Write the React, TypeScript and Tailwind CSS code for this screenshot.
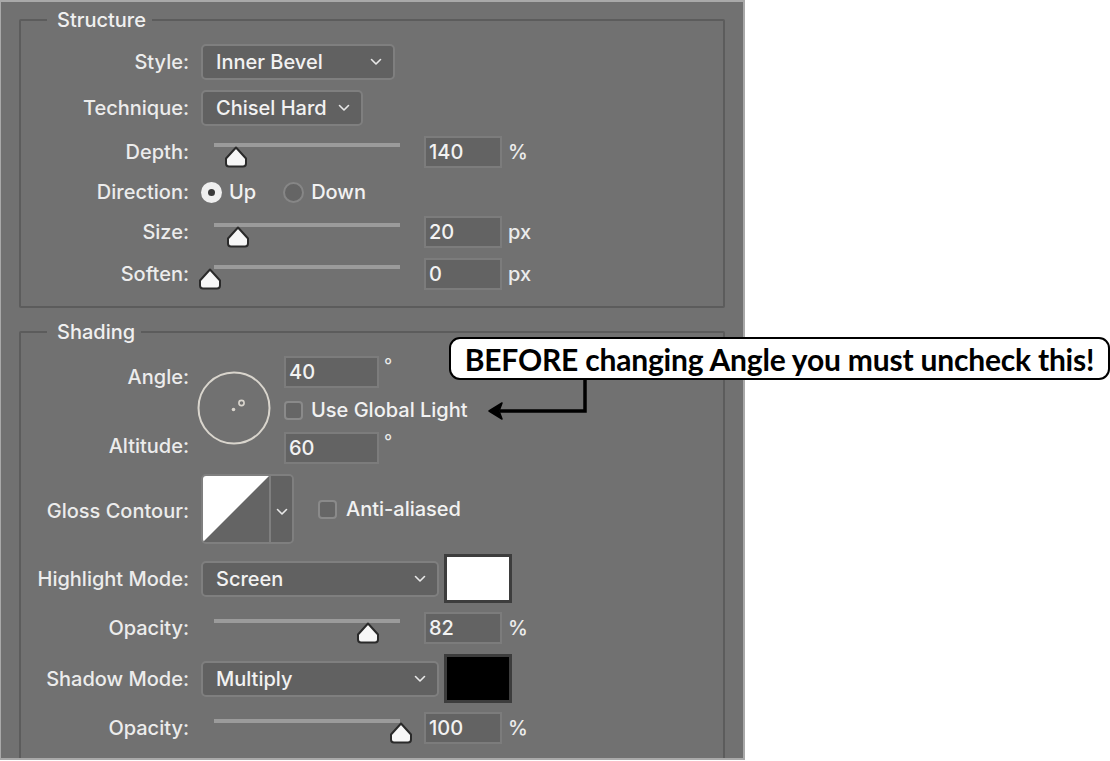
import React from "react";

const Chevron = () => (
  <svg width="12" height="8" viewBox="0 0 12 8" className="shrink-0">
    <path d="M1.5 1.5 L6 6 L10.5 1.5" fill="none" stroke="#e8e8e8" strokeWidth="1.6" strokeLinecap="round" strokeLinejoin="round" />
  </svg>
);

const Label = ({ children }: { children: React.ReactNode }) => (
  <div className="text-right text-[20px] leading-[24px] font-medium text-[#ececec] whitespace-nowrap">{children}</div>
);

const Dropdown = ({ text, width }: { text: string; width: string }) => (
  <div className={`flex items-center justify-between h-[36px] ${width} rounded-[5px] border-2 border-[#7f7f7f] bg-[#616161] pl-[13px] pr-[11px]`}>
    <span className="text-[20px] leading-[24px] font-medium text-[#f2f2f2]">{text}</span>
    <Chevron />
  </div>
);

const NumberBox = ({ value, width = "w-[78px]" }: { value: string; width?: string }) => (
  <div className={`flex items-center h-[32px] ${width} border-2 border-[#7c7c7c] bg-[#636363] pl-[3px] text-[20px] leading-[24px] font-medium text-[#f2f2f2]`}>
    {value}
  </div>
);

const Thumb = ({ left }: { left: number }) => (
  <svg
    width="24"
    height="22"
    viewBox="0 0 24 22"
    className="absolute top-[10px]"
    style={{ left: left - 12 }}
  >
    <path
      d="M12 1.5 L22 12.5 L22 17.5 Q22 20.5 19 20.5 L5 20.5 Q2 20.5 2 17.5 L2 12.5 Z"
      fill="#f7f7f7"
      stroke="#2a2a2a"
      strokeWidth="2"
      strokeLinejoin="round"
    />
  </svg>
);

// thumb position is in px from the start of the track
const SliderRow = ({ label, value, unit, thumb }: { label: string; value: string; unit: string; thumb: number }) => (
  <div className="grid grid-cols-[168px_1fr] gap-x-[12px] items-center h-[32px]">
    <Label>{label}</Label>
    <div className="flex items-center">
      <div className="relative w-[211px] h-[32px]">
        <div className="absolute left-[13px] top-[7px] w-[186px] h-[4px] bg-[#9b9b9b]" />
        <Thumb left={13 + thumb} />
      </div>
      <div className="ml-[12px]">
        <NumberBox value={value} />
      </div>
      <span className="ml-[6px] text-[20px] leading-[24px] font-medium text-[#ececec]">{unit}</span>
    </div>
  </div>
);

const Checkbox = () => (
  <div className="w-[19px] h-[19px] rounded-[4px] border-2 border-[#8a8a8a] bg-[#666666] shrink-0" />
);

const Group = ({ title, children, className = "" }: { title: string; children: React.ReactNode; className?: string }) => (
  <fieldset className={`border-2 border-[#5c5c5c] rounded-[2px] ${className}`}>
    <legend className="ml-[26px] pl-[10px] pr-[6px] text-[20px] leading-[24px] font-medium text-[#f0f0f0]">{title}</legend>
    {children}
  </fieldset>
);

export default function App() {
  return (
    <div className="relative w-[1110px] h-[761px] bg-white overflow-hidden font-['Inter','Liberation_Sans',sans-serif]">
      <div className="w-[745px] h-[760px] bg-[#717171] border-t-2 border-r-2 border-b-2 border-l border-[#a9a9a9] px-[18px] pt-[6px] overflow-hidden">
        <Group title="Structure" className="pt-[12px] pb-[16px]">
          <div className="grid grid-cols-[168px_1fr] gap-x-[12px] items-center h-[36px]">
            <Label>Style:</Label>
            <Dropdown text="Inner Bevel" width="w-[194px]" />
          </div>
          <div className="grid grid-cols-[168px_1fr] gap-x-[12px] items-center h-[36px] mt-[10px]">
            <Label>Technique:</Label>
            <Dropdown text="Chisel Hard" width="w-[162px]" />
          </div>
          <div className="mt-[10px]">
            <SliderRow label="Depth:" value="140" unit="%" thumb={22} />
          </div>
          <div className="grid grid-cols-[168px_1fr] gap-x-[12px] items-center h-[32px] mt-[8px]">
            <Label>Direction:</Label>
            <div className="flex items-center text-[20px] leading-[24px] font-medium text-[#f2f2f2]">
              <div className="w-[21px] h-[21px] rounded-full bg-[#efefef] flex items-center justify-center">
                <div className="w-[7px] h-[7px] rounded-full bg-[#3a3a3a]" />
              </div>
              <span className="ml-[7px]">Up</span>
              <div className="ml-[27px] w-[21px] h-[21px] rounded-full bg-[#656565] border-2 border-[#868686]" />
              <span className="ml-[7px]">Down</span>
            </div>
          </div>
          <div className="mt-[8px]">
            <SliderRow label="Size:" value="20" unit="px" thumb={24} />
          </div>
          <div className="mt-[10px]">
            <SliderRow label="Soften:" value="0" unit="px" thumb={-4} />
          </div>
        </Group>

        <Group title="Shading" className="mt-[12px] pt-[12px] pb-[40px]">
          <div className="grid grid-cols-[168px_1fr] gap-x-[12px] h-[108px]">
            <div className="flex flex-col pt-[9px] gap-[45px]">
              <Label>Angle:</Label>
              <Label>Altitude:</Label>
            </div>
            <div className="flex">
              <svg width="74" height="74" viewBox="0 0 74 74" className="-ml-[4px] mt-[15px] shrink-0">
                <circle cx="37" cy="37" r="35.5" fill="none" stroke="#d9d5cd" strokeWidth="2" />
                <circle cx="36.5" cy="38.5" r="1.8" fill="#d9d5cd" />
                <circle cx="44.5" cy="32" r="2.6" fill="none" stroke="#d9d5cd" strokeWidth="1.6" />
              </svg>
              <div className="ml-[13px] flex flex-col">
                <div className="flex items-start">
                  <NumberBox value="40" width="w-[95px]" />
                  <span className="ml-[5px] text-[18px] leading-[20px] text-[#ececec]">°</span>
                </div>
                <div className="flex items-center mt-[12px] h-[20px]">
                  <Checkbox />
                  <span className="ml-[8px] text-[20px] leading-[24px] font-medium text-[#f2f2f2]">Use Global Light</span>
                </div>
                <div className="flex items-start mt-[12px]">
                  <NumberBox value="60" width="w-[95px]" />
                  <span className="ml-[5px] text-[18px] leading-[20px] text-[#ececec]">°</span>
                </div>
              </div>
            </div>
          </div>

          <div className="grid grid-cols-[168px_1fr] gap-x-[12px] items-center h-[70px] mt-[10px]">
            <div className="pt-[3px]">
              <Label>Gloss Contour:</Label>
            </div>
            <div className="flex items-center">
              <div className="flex w-[93px] h-[70px] rounded-[5px] border-2 border-[#7f7f7f] overflow-hidden">
                <svg width="66" height="66" viewBox="0 0 66 66" className="shrink-0">
                  <rect width="66" height="66" fill="#646464" />
                  <polygon points="0,0 66,0 0,66" fill="#ffffff" />
                </svg>
                <div className="flex-1 border-l-2 border-[#7f7f7f] bg-[#626262] flex items-center justify-center pt-[6px]">
                  <Chevron />
                </div>
              </div>
              <div className="ml-[24px] flex items-center">
                <Checkbox />
                <span className="ml-[9px] text-[20px] leading-[24px] font-medium text-[#f2f2f2]">Anti-aliased</span>
              </div>
            </div>
          </div>

          <div className="grid grid-cols-[168px_1fr] gap-x-[12px] items-center h-[48px] mt-[10px]">
            <Label>Highlight Mode:</Label>
            <div className="flex items-center">
              <Dropdown text="Screen" width="w-[238px]" />
              <div className="ml-[5px] w-[68px] h-[49px] border-[3px] border-[#3d3d3d] bg-white" />
            </div>
          </div>
          <div className="mt-[10px]">
            <SliderRow label="Opacity:" value="82" unit="%" thumb={154} />
          </div>
          <div className="grid grid-cols-[168px_1fr] gap-x-[12px] items-center h-[48px] mt-[10px]">
            <Label>Shadow Mode:</Label>
            <div className="flex items-center">
              <Dropdown text="Multiply" width="w-[238px]" />
              <div className="ml-[5px] w-[68px] h-[49px] border-[3px] border-[#3d3d3d] bg-black" />
            </div>
          </div>
          <div className="mt-[10px]">
            <SliderRow label="Opacity:" value="100" unit="%" thumb={187} />
          </div>
        </Group>
      </div>

      {/* annotation */}
      <div className="absolute left-[449px] top-[337px] w-[661px] h-[43px] rounded-[11px] border-2 border-black bg-white flex items-center justify-center">
        <span className="font-['Lato','Open_Sans',sans-serif] font-bold text-[30px] leading-[32px] tracking-[-0.2px] text-black whitespace-nowrap">
          BEFORE changing Angle you must uncheck this!
        </span>
      </div>
      <svg width="110" height="46" viewBox="0 0 110 46" className="absolute left-[486px] top-[378px]">
        <path d="M99 1 L99 33 L14 33" fill="none" stroke="#000" strokeWidth="3.5" />
        <polygon points="3,33 16,25 13,33 16,41" fill="#000" stroke="#000" strokeWidth="1.5" strokeLinejoin="round" />
      </svg>
    </div>
  );
}
